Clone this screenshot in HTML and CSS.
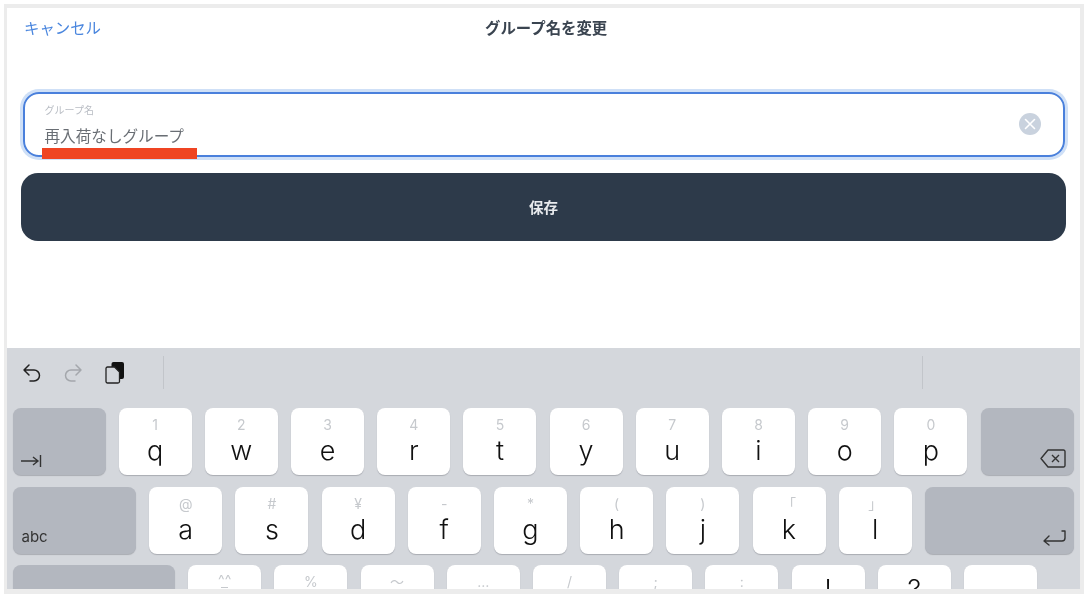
FILE: index.html
```html
<!DOCTYPE html>
<html lang="ja">
<head>
  <meta charset="UTF-8" />
  <title>グループ名を変更</title>
  <link rel="stylesheet" href="styles.css">
</head>
<body>
  <div class="frame">
    <!-- フォーム -->
    <div class="main">
      <div class="header">
        <a class="cancel">キャンセル</a>
        <div class="title">グループ名を変更</div>
      </div>

      <div class="field">
        <div class="field-text">
          <div class="field-label">グループ名</div>
          <div class="field-value">再入荷なしグループ</div>
        </div>
        <svg class="clear" viewBox="0 0 22 22">
          <circle cx="11" cy="11" r="11" fill="#c9d2de"/>
          <path d="M6.500 6.500l9 9M15.500 6.500l-9 9" stroke="#fff" stroke-width="1.600" stroke-linecap="round"/>
        </svg>
        <div class="redline"></div>
      </div>

      <button class="save">保存</button>
    </div>

    <!-- キーボード -->
    <div class="keyboard">
      <div class="toolbar">
        <div class="tools">
          <svg class="tool" viewBox="0 0 20 20" fill="none" stroke="#222" stroke-width="1.500" stroke-linecap="round" stroke-linejoin="round">
            <path d="M7 2L2 7l5 5M2 7h10a5.500 5.500 0 0 1 0 11H8"/>
          </svg>
          <svg class="tool" viewBox="0 0 20 20" fill="none" stroke="#a4a7ac" stroke-width="1.500" stroke-linecap="round" stroke-linejoin="round">
            <path d="M13 2l5 5-5 5M18 7H8a5.500 5.500 0 0 0 0 11h4"/>
          </svg>
          <svg class="paste" viewBox="0 0 20 24">
            <rect x="6.500" y="1" width="12.500" height="17" rx="2" fill="#111"/>
            <path d="M2.500 6h7l5 5v9.500a1.500 1.500 0 0 1-1.500 1.500H2.500A1.500 1.500 0 0 1 1 20.500v-13A1.500 1.500 0 0 1 2.500 6z" fill="#d4d7dc" stroke="#222" stroke-width="1.300"/>
          </svg>
        </div>
        <div class="divider"></div>
        <div class="spacer"></div>
        <div class="divider"></div>
        <div class="tools-end"></div>
      </div>

      <div class="row">
        <div class="key fn tab">
          <svg class="fn-icon" width="21" height="14" viewBox="0 0 21 14" fill="none" stroke="#333" stroke-width="1.400">
            <path d="M0 7h17M12 3l5 4-5 4M19.500 1v12"/>
          </svg>
        </div>
        <div class="key"><span class="hint">1</span><span class="letter">q</span></div>
        <div class="key"><span class="hint">2</span><span class="letter">w</span></div>
        <div class="key"><span class="hint">3</span><span class="letter">e</span></div>
        <div class="key"><span class="hint">4</span><span class="letter">r</span></div>
        <div class="key"><span class="hint">5</span><span class="letter">t</span></div>
        <div class="key"><span class="hint">6</span><span class="letter">y</span></div>
        <div class="key"><span class="hint">7</span><span class="letter">u</span></div>
        <div class="key"><span class="hint">8</span><span class="letter">i</span></div>
        <div class="key"><span class="hint">9</span><span class="letter">o</span></div>
        <div class="key"><span class="hint">0</span><span class="letter">p</span></div>
        <div class="key fn del">
          <svg class="fn-icon" width="26" height="19" viewBox="0 0 26 19" fill="none" stroke="#333" stroke-width="1.400" stroke-linejoin="round">
            <path d="M8 1h15.500a1.500 1.500 0 0 1 1.500 1.500v14a1.500 1.500 0 0 1-1.500 1.500H8L1 9.500z"/>
            <path d="M12 6l7 7M19 6l-7 7"/>
          </svg>
        </div>
      </div>

      <div class="row">
        <div class="key fn abc"><span class="fn-label">abc</span></div>
        <div class="key"><span class="hint">@</span><span class="letter">a</span></div>
        <div class="key"><span class="hint">#</span><span class="letter">s</span></div>
        <div class="key"><span class="hint">¥</span><span class="letter">d</span></div>
        <div class="key"><span class="hint">-</span><span class="letter">f</span></div>
        <div class="key"><span class="hint">*</span><span class="letter">g</span></div>
        <div class="key"><span class="hint">(</span><span class="letter">h</span></div>
        <div class="key"><span class="hint">)</span><span class="letter">j</span></div>
        <div class="key"><span class="hint">「</span><span class="letter">k</span></div>
        <div class="key"><span class="hint">」</span><span class="letter">l</span></div>
        <div class="key fn ret">
          <svg class="fn-icon" width="23" height="16" viewBox="0 0 23 16" fill="none" stroke="#333" stroke-width="1.400" stroke-linecap="round" stroke-linejoin="round">
            <path d="M6 6l-5 5 5 4M1 11h18a3 3 0 0 0 3-3V1h-3"/>
          </svg>
        </div>
      </div>

      <div class="row">
        <div class="key fn shift"></div>
        <div class="key"><span class="hint face">^^</span><span class="mouth"></span></div>
        <div class="key"><span class="hint">%</span></div>
        <div class="key"><span class="hint">〜</span></div>
        <div class="key"><span class="hint">…</span></div>
        <div class="key"><span class="hint">/</span></div>
        <div class="key"><span class="hint">;</span></div>
        <div class="key"><span class="hint">:</span></div>
        <div class="key"><span class="big">!</span></div>
        <div class="key"><span class="big">?</span></div>
        <div class="key"></div>
      </div>
    </div>
  </div>
</body>
</html>
```

FILE: styles.css
```css
* {
  margin: 0;
  padding: 0;
  box-sizing: border-box;
}

body {
  width: 1090px;
  height: 602px;
  overflow: hidden;
  background: #fff;
  padding: 4px 6px 8px 4px;
  font-family: "Inter", "Noto Sans CJK JP", sans-serif;
}

.frame {
  width: 1080px;
  height: 590px;
  display: flex;
  flex-direction: column;
  overflow: hidden;
  border: solid #ececec;
  border-width: 4px 4px 5px 3px;
  background: #fff;
  filter: blur(0.4px);
}

.main {
  flex: 1;
  padding: 0 14px;
}

.header {
  height: 83.500px;
  padding: 11px 0 0 3px;
  position: relative;
  display: flex;
  align-items: flex-start;
}

.cancel {
  font-size: 15.400px;
  line-height: 20px;
  color: #4a86de;
}

.title {
  position: absolute;
  top: 11px;
  left: 464px;
  font-size: 15.400px;
  line-height: 20px;
  font-weight: 700;
  color: #3a4450;
}

.field {
  position: relative;
  height: 65.500px;
  margin: 0 1.500px;
  padding: 0 22px 0 20px;
  display: flex;
  align-items: center;
  justify-content: space-between;
  border: 2px solid #4a80dc;
  border-radius: 16px;
  box-shadow: 0 0 0 3px #cfe0f7;
}

.field-text {
  padding-top: 1px;
}

.field-label {
  font-size: 10px;
  line-height: 14px;
  color: #b9bdc4;
  margin-bottom: 10px;
}

.field-value {
  font-size: 15.600px;
  line-height: 20px;
  color: #696e74;
}

.clear {
  width: 22px;
  height: 22px;
}

.redline {
  position: absolute;
  left: 17px;
  bottom: -4px;
  width: 155px;
  height: 11px;
  background: #ef4423;
}

.save {
  display: block;
  width: 100%;
  height: 68px;
  margin-top: 16px;
  padding-bottom: 2px;
  border: none;
  border-radius: 17px;
  background: #2d3a4a;
  color: #e8eaed;
  font-family: inherit;
  font-size: 14.500px;
  font-weight: 700;
}

.keyboard {
  height: 241.500px;
  padding: 0 6px 0 5.500px;
  overflow: hidden;
  background: #d4d7dc;
}

.toolbar {
  height: 60.500px;
  margin: 0 -5.500px;
  padding-bottom: 10px;
  display: flex;
  align-items: center;
}

.tools {
  width: 156px;
  padding-left: 15px;
  display: flex;
  align-items: center;
}

.tool {
  width: 20px;
  height: 20px;
  margin-right: 21px;
}

.paste {
  width: 20px;
  height: 24px;
  margin: 0 0 0 1px;
}

.divider {
  width: 1px;
  height: 33px;
  background: #c2c5ca;
}

.spacer {
  flex: 1;
}

.tools-end {
  width: 157px;
}

.row {
  display: flex;
  gap: 13.200px;
  margin-bottom: 11.500px;
}

.key {
  width: 73px;
  height: 67px;
  flex-shrink: 0;
  display: flex;
  flex-direction: column;
  align-items: center;
  padding-top: 8px;
  background: #fff;
  border-radius: 8px;
  box-shadow: 0 1px 1px #a9acb2;
}

.hint {
  font-size: 14px;
  line-height: 18px;
  color: #c6c9cd;
}

.face {
  line-height: 13px;
}

.mouth {
  width: 7px;
  height: 1px;
  margin-top: 1px;
  background: #c6c9cd;
}

.letter {
  font-size: 27px;
  line-height: 32px;
  margin-top: 1px;
  font-weight: 300;
  color: #111;
}

.big {
  font-size: 27px;
  line-height: 30px;
  margin-top: 2px;
  font-weight: 300;
  color: #111;
}

.fn {
  position: relative;
  background: #b3b7bf;
}

.tab, .del {
  width: 93px;
}

.abc {
  width: 123.500px;
}

.ret {
  width: 149px;
}

.shift {
  width: 162.500px;
}

.fn-label {
  position: absolute;
  left: 9px;
  bottom: 8px;
  font-size: 15px;
  line-height: 18px;
  color: #333;
}

.fn-icon {
  position: absolute;
  bottom: 7px;
}

.tab .fn-icon {
  left: 8px;
}

.del .fn-icon {
  right: 8px;
}

.ret .fn-icon {
  right: 8px;
  bottom: 8px;
}
```
